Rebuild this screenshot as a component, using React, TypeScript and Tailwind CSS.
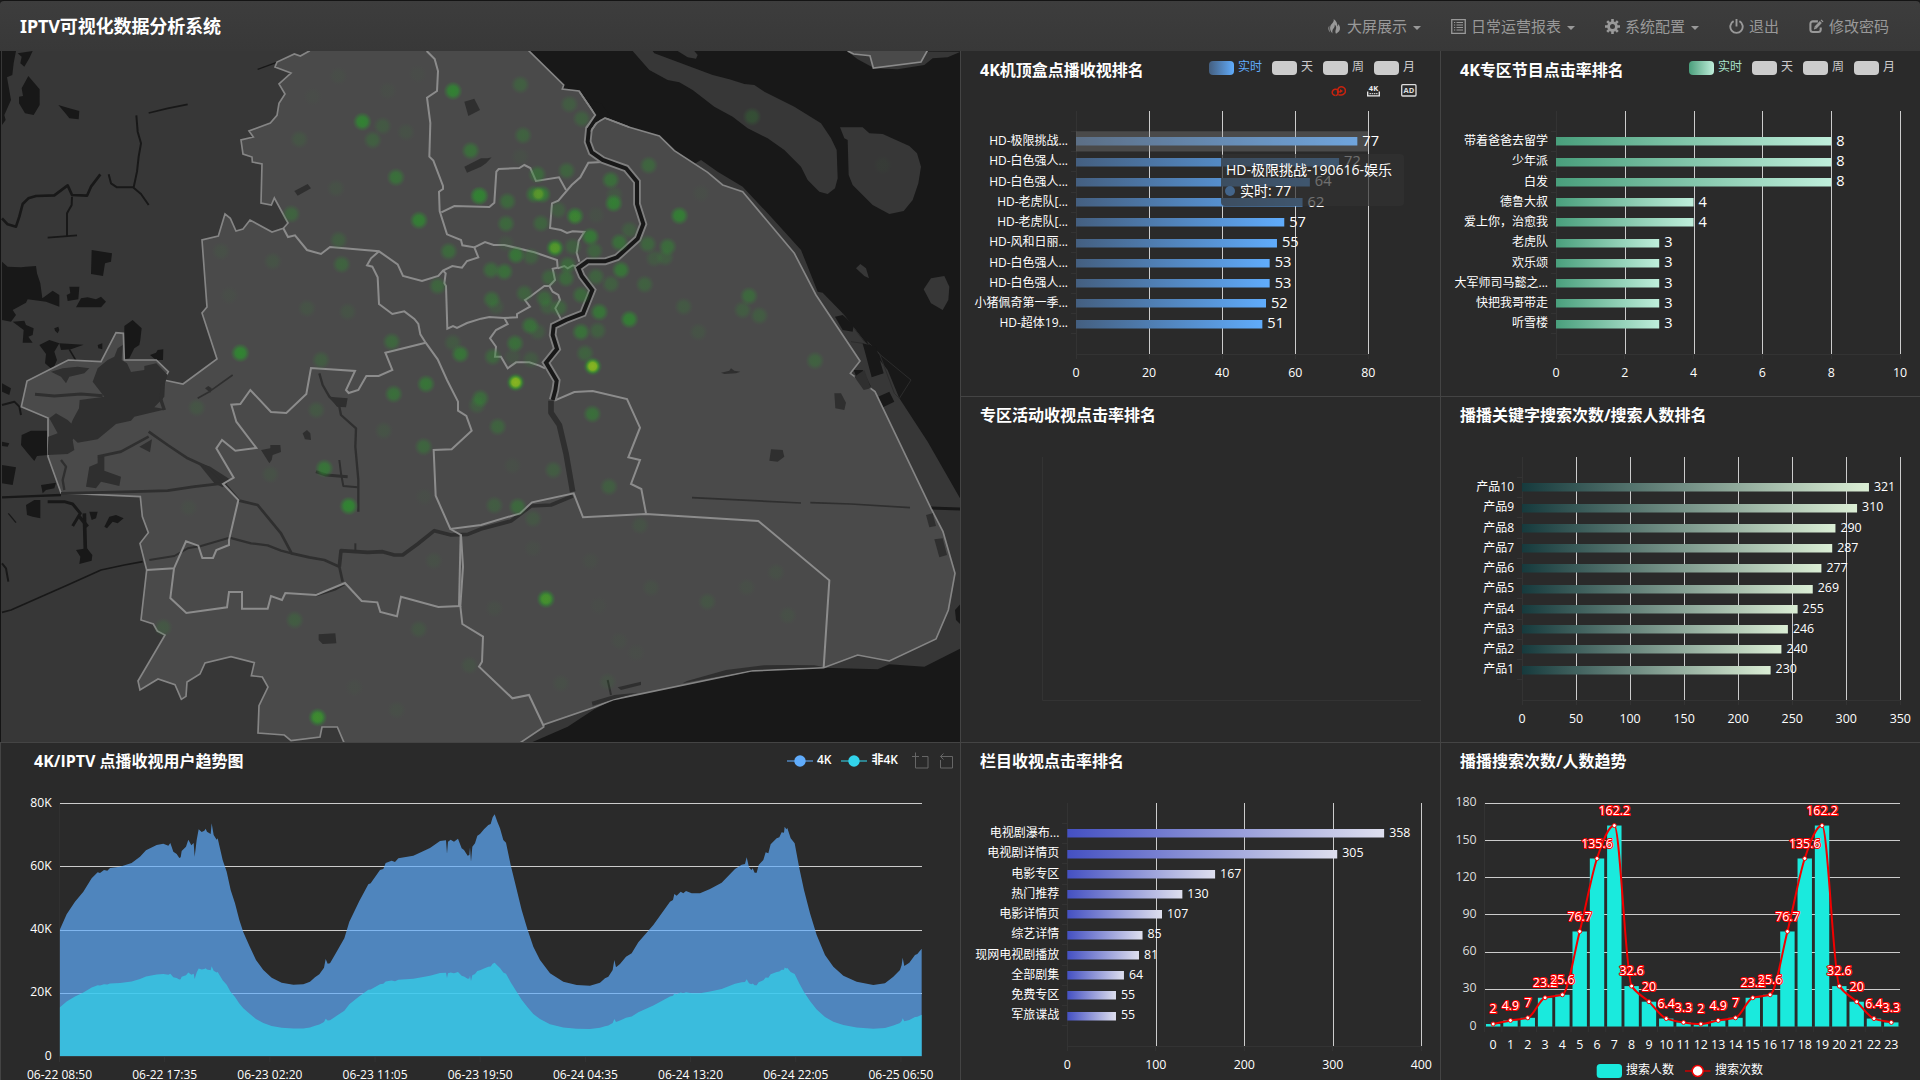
import React from "react";

const FONT = '"Open Sans", "Noto Sans CJK SC", sans-serif';
const NAV_FONT = '"Noto Sans", "Noto Sans CJK SC", sans-serif';

/* ---------- navigation icons ---------- */

const FireIcon = () => (
  <svg width="15" height="15" viewBox="0 0 15 15" fill="currentColor">
    <path d="M6.6 0C7.6 2.8 4.4 4.6 3.4 7 2.5 9.300 3.200 12.400 5.600 14.600 5 12.400 5.400 10.800 6.500 9.400 7.600 8 8 6.800 7.600 5.400 9.200 6.600 9.600 8.600 8.900 10.200 8.300 11.600 8.200 13.200 9 14.800 11.600 13.600 13.400 11.400 13 8.600 12.800 6.800 12 5.800 11.200 5 11.300 6 11 6.800 10.400 7.400 10.400 4.400 9.400 1.600 6.600 0Z" />
    <path d="M2.300 6.400C.8 8.400 1 11.600 3.400 13.800 2.300 11.600 2.200 9 2.300 6.400Z" />
  </svg>
);

const ListIcon = () => (
  <svg width="15" height="15" viewBox="0 0 15 15" fill="none" stroke="currentColor">
    <path d="M.75.5h13.500v14H.75z" strokeWidth="1.300" />
    <path d="M3 3.500h1.200M5.500 3.500H12M3 6h1.200M5.500 6H12M3 8.500h1.200M5.500 8.500H12M3 11h1.200M5.500 11H12" strokeWidth="1.200" />
  </svg>
);

const CogIcon = () => (
  <svg width="15" height="15" viewBox="0 0 15 15" fill="none" stroke="currentColor">
    <circle cx="7.500" cy="7.500" r="3.900" strokeWidth="2.800" />
    <path d="M7.500 0v3M7.500 12v3M0 7.500h3M12 7.500h3M2.200 2.200l2 2M10.800 10.800l2 2M12.800 2.200l-2 2M4.200 10.800l-2 2" strokeWidth="2.600" />
  </svg>
);

const OffIcon = () => (
  <svg width="15" height="15" viewBox="0 0 15 15" fill="none" stroke="currentColor" strokeWidth="1.900">
    <path d="M4.600 2.200A6.200 6.200 0 1 0 10.400 2.200" />
    <path d="M7.500 0v7.500" />
  </svg>
);

const EditIcon = () => (
  <svg width="16" height="15" viewBox="0 0 16 15" fill="none" stroke="currentColor">
    <path d="M9.500 2H4.200A2.700 2.700 0 0 0 1.500 4.700v6A2.700 2.700 0 0 0 4.200 13.400h5.600A2.700 2.700 0 0 0 12.500 10.700V8.500" strokeWidth="2.200" />
    <path d="M6.800 8.800L12.600 2.800" strokeWidth="3" />
    <path d="M13.400 2l1-1" strokeWidth="3" />
    <path d="M5.200 10.600l.6-2.600 2 2z" fill="currentColor" stroke="none" />
  </svg>
);

const NAV = [
  { label: "大屏展示", icon: <FireIcon />, caret: true },
  { label: "日常运营报表", icon: <ListIcon />, caret: true },
  { label: "系统配置", icon: <CogIcon />, caret: true },
  { label: "退出", icon: <OffIcon />, caret: false },
  { label: "修改密码", icon: <EditIcon />, caret: false },
];

function Header() {
  return (
    <header
      className="flex h-[51px] shrink-0 items-center justify-between rounded-t-[4px] border-t border-[#141414] bg-linear-to-b from-[#3d3d3d] to-[#383838] pr-[31px] pl-[20px]"
      style={{ fontFamily: NAV_FONT }}
    >
      <h1 className="text-[18px] leading-[26px] font-bold tracking-[-0.1px] whitespace-nowrap text-white">IPTV可视化数据分析系统</h1>
      <nav className="flex items-center gap-[30px] text-[15px] leading-[20px] text-[#999]">
        {NAV.map((n) => (
          <a key={n.label} className="flex items-center whitespace-nowrap">
            <span className="mr-[5px] flex w-[15px] shrink-0">{n.icon}</span>
            <span>{n.label}</span>
            {n.caret && <span className="mt-[4px] ml-[6px] border-x-4 border-t-4 border-x-transparent border-t-[#999]" />}
          </a>
        ))}
      </nav>
    </header>
  );
}

/* ---------- map ---------- */

const CITY =
  "925,153 898,168 880,162 828,186 822,201 870,219 834,252 852,282 834,310 828,346 808,369 744,393 757,411 720,420 726,462 753,471 754,486 783,492 780,609 811,615 820,594 861,669 847,685 813,696 747,660 726,687 705,693 688,655 672,642 652,708 603,720 618,921 603,939 648,1077 546,1152 488,1140 502,1115 466,1080 370,1080 367,1000 345,998 300,1085 202,1080 78,1143 61,1220 141,1254 141,1370 180,1479 418,1490 424,1550 442,1598 417,1630 437,1710 420,1860 457,1872 469,1893 492,1905 411,2043 417,2070 471,2037 522,2054 541,2098 555,2089 558,2046 597,2022 612,1989 690,1970 760,1988 751,2027 784,2031 801,2061 774,2117 771,2199 850,2205 870,2222 957,2211 963,2181 1009,2181 1030,2230 1555,2230 1628,2181 1628,2174 1780,2122 1840,2098 2250,2013 2468,2003 2570,1965 2665,1983 2805,1917 2842,1830 2862,1720 2826,1595 2790,1525 2622,1175 2548,1120 2577,1083 2445,885 2380,760 2225,575 2165,555 2120,517 2020,452 1975,408 1885,382 1812,354 1783,345 1734,273 1684,267 1688,255 1580,149 925,149";

const DISTRICTS = [
  "1277,153 1301,177 1311,213 1308,273 1278,293 1288,369 1285,470 1297,482 1326,558 1326,567 1314,575 1316,633 1338,703 1380,720 1384,736 1420,742 1432,772 1398,783 1383,803 1354,798 1326,812 1312,828 1263,843 1206,828 1190,793 1134,754 987,741 960,762 918,750 882,706 861,711 847,685",
  "1321,637 1360,618 1465,621 1480,608 1486,515 1493,507 1555,504 1570,495 1588,504 1605,543 1674,532 1695,570",
  "1805,486 1762,488 1738,532 1712,555 1672,602 1653,610 1647,684 1680,690 1698,699 1715,694 1750,696 1733,722 1727,758 1735,785",
  "1420,742 1452,726 1478,735 1510,735 1600,757 1668,780 1670,803 1655,806 1662,840 1645,858 1630,858 1590,888 1572,900 1587,920 1548,942 1548,952 1510,954 1520,972 1485,990 1467,1015 1485,1040 1482,1070 1500,1070 1520,1105 1545,1087 1585,1087 1615,1097 1632,1105",
  "1670,805 1690,798 1700,805 1715,796 1727,800",
  "1645,858 1655,875 1672,885 1677,900 1663,925 1680,958",
  "1326,812 1334,820 1330,850 1335,858 1339,986 1356,978 1368,984 1398,969 1440,956 1465,951 1510,954",
  "1134,754 1110,775 1098,796 1114,800 1130,832 1134,912 1174,942 1210,934 1240,957 1252,972 1258,1003 1274,1028 1310,1078 1338,1140 1371,1205 1371,1232 1396,1248 1412,1292 1352,1348 1298,1350 1304,1487 1348,1587 1440,1575 1557,1540 1593,1507 1718,1480 1746,1552 1935,1542 2272,1563 2485,1741 2468,2003",
  "1274,1028 1153,1058 1174,1110 1133,1128 1096,1128 1072,1170 1043,1179 1035,1170 1062,1113 930,1104 916,1182 856,1239 810,1236 748,1170 718,1212 691,1214 706,1265 766,1344 703,1352 663,1320 646,1345 698,1433 666,1452 712,1500 684,1620 684,1635 646,1650 636,1674 604,1674 592,1637 555,1624 519,1705 437,1710",
  "519,1705 508,1794 556,1839 678,1822 684,1776 723,1776 723,1826 800,1826 810,1788 843,1800 853,1779 945,1785 1032,1749 1082,1803 1129,1807 1138,1836 1188,1849 1200,1790 1312,1821 1378,1818 1386,1700 1380,1605 1348,1587",
  "1374,1818 1379,1605",
  "1378,1818 1384,1872 1446,1910 1443,1985 1434,2000 1534,2095 1584,2085 1628,2178",
  "1660,1202 1720,1176 1775,1173 1878,1197 1917,1283 1882,1372 1917,1380 1890,1452 1921,1467 1935,1540",
];

const RIVER =
  "1798,340 1764,385 1760,425 1772,457 1805,480 1875,505 1908,545 1908,612 1927,672 1910,716 1848,772 1812,784 1760,784 1732,804 1742,828 1774,870 1746,940 1695,960 1658,978 1655,1005 1668,1047 1635,1088 1667,1142 1663,1170 1655,1200";

const SEA = [
  "1560,153 2880,153 2880,1500 2780,1325 2695,1195 2660,1110 2590,1022 2525,940 2465,878 2450,875 2425,812 2400,750 2300,640 2225,560 2150,515 2100,480 1900,600",
  "1590,2228 1700,2180 1780,2128 1840,2098 2200,1900 2468,2003 2630,2008 2665,1993 2770,2000 2880,1945 2880,2228",
];

const ISLANDS = [
  "455,33 505,90 560,120 595,127 635,150 700,200 755,230 800,265 860,295 910,330 960,380 980,420 1015,455 1040,462 1062,445 1070,415 1067,330 1050,295 1020,250 940,200 850,155 820,135 790,132 745,118 695,105 520,40 515,33",
  "1077,262 1145,262 1165,280 1205,282 1285,318 1308,340 1320,380 1312,430 1295,480 1268,513 1225,522 1175,495 1115,435 1103,405 1100,300 1090,295",
  "1125,685 1138,672 1155,685 1164,715 1150,708",
  "1328,748 1350,715 1390,708 1405,740 1402,780 1385,810 1350,790",
  "1098,33 1130,58 1180,85 1250,88 1330,75 1355,55 1400,52 1440,35",
  "590,33 620,52 645,56 650,45 640,33",
];

const WEST_WATER = [
  "3,153 45,153 38,190 34,225 18,232 30,300 10,345 14,360 3,375",
  "50,160 95,153 85,175 70,200 58,190 62,170",
  "62,265 82,228 116,268 116,315 98,345 72,340 54,310 54,290 66,288",
  "172,315 205,325 235,333 233,358 205,355 195,342",
  "272,750 333,760 330,785 312,790 306,828 270,822",
  "3,785 20,800 60,802 75,800 105,798 108,820 118,850 124,895 155,872 175,885 175,920 135,905 80,898 75,908 35,930 45,945 30,965 3,960",
  "205,860 235,860 232,898 200,903 197,885 208,880",
  "225,922 240,895 260,892 285,898 300,890 315,905 300,922",
  "35,965 70,962 75,975 98,985 95,1005 82,1010 95,1028 65,1028 68,990",
  "370,978 395,960 422,985 418,1020 415,1035 400,1045 385,1075 370,1078",
  "115,1035 145,1020 175,1030 160,1055 168,1080 155,1110 132,1090 135,1062",
  "175,1030 248,1034 210,1048 180,1050",
  "447,1065 465,1058 470,1050 487,1048 486,1080 465,1080",
  "160,985 172,980 175,990 170,1000 162,992",
  "290,1035 304,1030 304,1048 292,1045",
  "3,1150 30,1165 25,1185 3,1175",
  "62,1305 90,1292 140,1292 140,1365 108,1368 100,1383 80,1360 60,1335",
  "3,1395 45,1402 35,1455 3,1450",
  "3,1325 25,1330 20,1340 3,1338",
  "75,1515 100,1500 118,1500 118,1555 95,1550 78,1545",
  "225,1650 258,1645 274,1665 272,1682 235,1692 238,1670",
  "310,1580 325,1550 345,1545 368,1555 350,1570 335,1565 318,1585",
  "265,1535 290,1535 285,1555 272,1560",
  "120,1455 165,1448 160,1465 135,1470 125,1480",
];

const WEST_STREAMS: [string, number][] = [
  ["406,346 410,395 420,430 413,470 408,515 398,562", 6],
  ["443,339 500,325 560,313", 5],
  ["3,655 20,673 45,680 55,650 65,612 82,595 105,588 160,586 200,556 213,585 258,587 270,560 298,523", 8],
  ["323,523 330,550 348,562 396,562 420,582 443,615", 6],
  ["213,590 212,615 198,640 198,710", 6],
  ["140,713 180,710 228,706", 5],
  ["770,208 825,188", 4],
  ["205,1048 230,1090", 5],
  ["3,1492 60,1490 180,1485", 7],
  ["3,1837 30,1830 120,1790 200,1755 300,1710 370,1695 425,1685", 5],
  ["140,1505 190,1505 215,1512 238,1540 215,1578", 9],
  ["250,1540 253,1650", 11],
  ["235,1550 260,1580", 10],
  ["3,1215 40,1205 55,1220 60,1245", 6],
  ["22,1540 45,1568", 4],
  ["3,1690 15,1705 22,1745", 6],
];

const INNER_WATER = [
  "365,1035 350,1045 340,1070 320,1080 290,1105 275,1145 310,1190 236,1200 234,1225 215,1260 200,1300 230,1328 290,1318 330,1285 345,1272 390,1262 400,1250 450,1238 495,1228 460,1222 490,1190 492,1150 500,1125 466,1090 430,1098 430,1110 390,1116 378,1090 362,1080",
  "145,1255 165,1240 200,1260 232,1290 215,1320 220,1350 200,1362 140,1365 142,1310 170,1300",
  "185,1105 230,1100 265,1105 250,1120 205,1130 195,1150 180,1130 150,1115",
  "255,1460 265,1400 290,1390 290,1370 310,1365 310,1412 360,1430 355,1458 320,1450 300,1445 285,1465",
  "415,1340 453,1318 447,1357",
  "590,1388 628,1400 690,1440 665,1462 640,1450",
  "780,1350 808,1345 808,1335 838,1335 840,1356 815,1365 812,1380 805,1390",
  "905,1300 918,1290 928,1300 930,1320 912,1318",
  "953,1903 1003,1900 1006,1930 965,1932 953,1920",
  "880,573 920,552 930,565 890,587",
  "1390,305 1420,296 1437,330 1402,348",
  "1390,500 1440,475 1440,500 1398,518",
  "1440,475 1460,475 1472,472 1455,490 1440,500",
  "985,1190 1040,1195 1035,1222 1008,1220",
  "612,1165 622,1158 632,1165 628,1178",
  "2310,1348 2345,1350 2350,1370 2330,1385 2305,1382",
  "2500,1180 2520,1180 2535,1208 2530,1230 2503,1225",
  "2160,1118 2185,1112 2190,1105 2200,1112 2218,1115 2205,1120 2170,1122",
  "2058,2043 2175,2010 2290,1996 2360,1995 2440,1996 2468,2001 2255,2010 2045,2050",
  "1772,2105 1840,2085 1910,2078 1840,2097 1775,2117",
  "1850,2062 1920,2045 1920,2055 1860,2070",
  "2775,1545 2795,1540 2805,1578 2785,1582",
  "2800,1618 2825,1615 2838,1665 2815,1672",
  "2560,1130 2590,1110 2610,1165 2588,1170",
];

const INNER_STREAMS: [string, number][] = [
  ["443,1295 500,1335 560,1375 625,1405 670,1450 715,1502 770,1515 840,1600 872,1660 925,1672 970,1680 1015,1700 1025,1745", 8],
  ["685,1613 750,1630 800,1636 840,1652 872,1660", 7],
  ["445,1680 520,1668 560,1645 600,1638 685,1613", 6],
  ["180,1480 400,1475 500,1472 580,1460 665,1450", 8],
  ["290,1370 360,1355 443,1310", 8],
  ["102,1183 160,1188 240,1182 305,1187", 9],
  ["1015,1700 1020,1652 1100,1657 1145,1655 1180,1665 1205,1665 1250,1632 1300,1592 1350,1605 1400,1603 1440,1587 1530,1563 1590,1518 1650,1515 1715,1488", 11],
  ["955,1120 965,1155 985,1190 1015,1220 1020,1245 1065,1285 1063,1340 1072,1440 1072,1535", 7],
  ["1015,1380 1020,1420 1027,1458 1070,1462", 6],
  ["945,1415 975,1425 1040,1430", 9],
  ["590,1195 625,1175 695,1125", 5],
  ["1650,1202 1650,1238 1675,1275 1695,1360 1715,1475", 17],
  ["2073,1493 2400,1509", 5],
  ["2428,1508 2550,1512 2727,1523", 5],
  ["1820,2040 1830,2085", 6],
  ["945,1785 1000,1768 1030,1752", 9],
  ["485,1150 480,1200 490,1230", 10],
  ["180,1380 195,1400 185,1440 190,1470", 7],
  ["1063,1630 1063,1652", 6],
];

type Dot = [number, number, number];
const HEAT: { dx: number; dy: number; dots: Dot[] }[] = [
  {
    dx: 0,
    dy: 0,
    dots: [
      [1356, 273, 0.9], [1084, 365, 0.9], [1145, 378, 0.25], [1115, 420, 0.35], [1215, 396, 0.12], [895, 418, 0.18], [1409, 452, 0.6],
      [1185, 532, 0.62], [1005, 565, 0.12], [1254, 661, 0.85], [871, 642, 0.42], [1013, 720, 0.3], [1022, 793, 0.42], [1343, 754, 0.52],
      [815, 784, 0.15], [660, 754, 0.1], [685, 886, 0.06], [918, 925, 0.15], [1040, 935, 0.15], [1310, 858, 0.45], [1172, 1025, 0.48],
      [718, 1059, 0.95], [960, 1080, 0.3], [1355, 1028, 0.25], [1378, 1062, 0.7], [1275, 1152, 0.7], [1178, 1182, 0.6], [1434, 588, 0.7],
      [1012, 228, 0.06], [1160, 272, 0.06], [1250, 222, 0.04], [935, 290, 0.04],
    ],
  },
  {
    dx: 1440,
    dy: 120,
    dots: [
      [118, 134, 0.35], [265, 193, 0.3], [302, 236, 0.35], [126, 286, 0.4], [118, 350, 0.08], [503, 376, 0.45], [257, 392, 0.42],
      [169, 403, 0.5], [389, 420, 0.6], [-4, 467, 0.6], [79, 484, 0.5], [160, 463, 0.65], [183, 463, 0.75], [398, 490, 0.85], [400, 465, 0.2],
      [282, 528, 0.85], [75, 551, 0.5], [180, 550, 0.42], [345, 525, 0.1], [595, 527, 0.85], [232, 510, 0.3], [660, 460, 0.06],
      [328, 590, 0.75], [445, 570, 0.3], [415, 607, 0.6], [222, 624, 0.95], [500, 612, 0.45], [560, 620, 0.55], [552, 652, 0.3],
      [520, 655, 0.25], [105, 645, 0.7], [150, 650, 0.35], [340, 632, 0.4], [275, 620, 0.35], [30, 690, 0.5], [70, 695, 0.6],
      [260, 675, 0.5], [255, 715, 0.5], [205, 712, 0.4], [420, 690, 0.7], [345, 710, 0.4], [390, 732, 0.35], [491, 733, 0.38],
      [130, 760, 0.4], [190, 775, 0.45], [300, 765, 0.5], [32, 778, 0.5], [45, 800, 0.2], [235, 803, 0.4], [200, 800, 0.3], [355, 816, 0.7],
      [445, 838, 0.85], [147, 857, 0.6], [170, 875, 0.25], [608, 800, 0.25], [804, 768, 0.5], [785, 810, 0.3], [835, 827, 0.3],
      [652, 876, 0.15], [300, 876, 0.65], [350, 872, 0.35], [102, 910, 0.6], [312, 940, 0.4], [335, 979, 1], [104, 1027, 1],
      [35, 950, 0.45], [150, 958, 0.25], [1002, 962, 0.38], [813, 230, 0.3], [1205, 375, 0.05], [-2, 1075, 0.55], [334, 1122, 0.6],
      [50, 1160, 0.42], [95, 950, 0.15], [75, 610, 0.15],
    ],
  },
  {
    dx: 0,
    dy: 1140,
    dots: [
      [587, 83, 0.18], [946, 90, 0.22], [1148, 152, 0.15], [1268, 200, 0.45], [808, 283, 0.12], [970, 265, 0.7], [1043, 378, 0.95],
      [563, 383, 0.07], [1270, 350, 0.06], [1298, 542, 0.1], [487, 742, 0.22], [881, 720, 0.3], [1253, 748, 0.18], [1405, 856, 0.13],
      [1187, 990, 0.08], [950, 1012, 0.95], [1060, 922, 0.05], [1428, 75, 0.3],
    ],
  },
  {
    dx: 1440,
    dy: 1140,
    dots: [
      [94, 257, 0.08], [217, 270, 0.3], [384, 320, 0.33], [40, 376, 0.3], [110, 380, 0.5], [156, 416, 0.2], [477, 436, 0.14],
      [156, 505, 0.06], [328, 543, 0.06], [885, 577, 0.1], [510, 623, 0.1], [797, 622, 0.08], [679, 665, 0.18], [195, 657, 0.98],
      [920, 706, 0.1], [40, 685, 0.07], [353, 677, 0.04], [415, 783, 0.06], [465, 818, 0.05], [240, 910, 0.08], [380, 905, 0.12],
    ],
  },
];

const HOT: Dot[] = [
  [1775, 1099, 1], [1544, 1147, 1], [1662, 744, 0.4], [1612, 582, 0.45], [1635, 1797, 0.25], [950, 2152, 0.15], [1722, 652, 0.1],
];

function CityMap() {
  return (
    <svg className="block h-[691px] w-[960px]" viewBox="0 153 2880 2073">
      <defs>
        <radialGradient id="heat">
          <stop offset="0" stopColor="#2d8c2d" stopOpacity="0.95" />
          <stop offset="0.5" stopColor="#2f8a31" stopOpacity="0.85" />
          <stop offset="0.8" stopColor="#348036" stopOpacity="0.35" />
          <stop offset="1" stopColor="#348036" stopOpacity="0" />
        </radialGradient>
        <radialGradient id="hot">
          <stop offset="0" stopColor="#88b522" />
          <stop offset="0.5" stopColor="#82b022" stopOpacity="0.95" />
          <stop offset="1" stopColor="#35962c" stopOpacity="0" />
        </radialGradient>
      </defs>
      <rect x="0" y="153" width="2880" height="2073" fill="#373737" />
      <g fill="#181818">
        {SEA.map((p) => <polygon key={p} points={p} />)}
        {WEST_WATER.map((p) => <polygon key={p} points={p} />)}
        <polygon points="2862,1830 2880,1810 2880,1875 2865,1860" />
      </g>
      <g fill="none" stroke="#181818" strokeLinejoin="round">
        {WEST_STREAMS.map(([p, w]) => <polyline key={p} points={p} strokeWidth={w} />)}
        <polyline points="2765,1523 2880,1527" strokeWidth="9" />
      </g>
      <g transform="translate(1440 120)">
        <g fill="#373737">{ISLANDS.map((p) => <polygon key={p} points={p} />)}</g>
        <polygon points="1105,33 1118,42 1165,46 1177,84 1320,66 1340,33" fill="#4a4a4a" />
        <polyline points="1100,33 1118,42 1167,47 1177,84 1320,66 1340,30" fill="none" stroke="#8a8a8a" strokeWidth="5" />
        <path d="M1110 905L1145 910 1180 1000 1205 1000 1160 905 1195 940 1240 1060 1255 1075 1290 1020 1150 905 1085 820" fill="none" stroke="#2c2c2c" strokeWidth="3" />
        <path d="M1145 910L1185 920 1208 1000 1172 1012ZM1118 990L1145 990 1170 1040 1130 1020ZM1188 1072L1225 1055 1240 1085 1200 1105ZM1062 830L1085 825 1118 855 1115 875 1085 870Z" fill="#181818" />
      </g>
      <polygon points={CITY} fill="#4a4a4a" stroke="#858585" strokeWidth="5" />
      <g fill="#2f2f2f">{INNER_WATER.map((p) => <polygon key={p} points={p} />)}</g>
      <g fill="none" stroke="#2f2f2f" strokeLinejoin="round">
        {INNER_STREAMS.map(([p, w]) => <polyline key={p} points={p} strokeWidth={w} />)}
      </g>
      <g fill="none" stroke="#8c8c8c" strokeWidth="6">
        {DISTRICTS.map((p) => <polyline key={p} points={p} />)}
      </g>
      <polyline points={RIVER} fill="none" stroke="#7f7f7f" strokeWidth="23" />
      <polyline points={RIVER} fill="none" stroke="#181818" strokeWidth="12" />
      <polygon points="1765,300 1800,310 1830,350 1800,358 1783,372 1768,366 1782,345" fill="#181818" />
      <polyline points="1734,273 1783,345 1757,383" fill="none" stroke="#858585" strokeWidth="5" />
      <polyline points="1885,382 1812,354 1785,370 1770,395" fill="none" stroke="#858585" strokeWidth="5" />
      {HEAT.map((g) => (
        <g key={`${g.dx}-${g.dy}`} transform={`translate(${g.dx} ${g.dy})`}>
          {g.dots.map(([x, y, o]) => (
            <circle key={`${x}-${y}`} cx={x} cy={y} r="29" fill="url(#heat)" opacity={o} />
          ))}
        </g>
      ))}
      {HOT.map(([x, y, o]) => (
        <circle key={x} cx={x} cy={y} r="23" fill="url(#hot)" opacity={o} />
      ))}
    </svg>
  );
}

/* ---------- horizontal bar charts ---------- */

type Row = [string, number];

interface BarProps {
  id: string;
  view: string;
  x0: number;
  x1: number;
  top: number;
  max: number;
  step: number;
  from: string;
  to: string;
  rows: Row[];
  valueSize: number;
  hover?: boolean;
}

const SLOT = 20.25;

function BarChart({ id, view, x0, x1, top, max, step, from, to, rows, valueSize, hover }: BarProps) {
  const k = (x1 - x0) / max;
  const bottom = top + 243;
  const ticks = Array.from({ length: Math.floor(max / step) + 1 }, (_, i) => i * step);
  return (
    <svg className="block min-h-0 flex-1" viewBox={view} preserveAspectRatio="xMinYMin meet" style={{ fontFamily: FONT }}>
      <defs>
        <linearGradient id={id}>
          <stop offset="0" stopColor={from} />
          <stop offset="1" stopColor={to} />
        </linearGradient>
      </defs>
      <g stroke="#333" shapeRendering="crispEdges">
        <path d={`M${x0} ${top}V${bottom}H${x1}`} fill="none" />
        {ticks.map((t) => <path key={t} d={`M${x0 + t * k} ${bottom}v5`} />)}
        {rows.concat([["", 0]]).map((r, i) => <path key={i} d={`M${x0 - 5} ${top + SLOT * (i + 1)}h5`} />)}
      </g>
      {ticks.slice(1).map((t) => (
        <rect key={t} x={Math.round(x0 + t * k)} y={top} width="1" height={243} fill="#ccc" />
      ))}
      {rows.map(([name, v], i) => {
        const c = top + SLOT * (i + 1.5);
        return (
          <g key={i}>
            <rect x={x0} y={Math.round(c - 4)} width={v * k} height="8.500" fill={`url(#${id})`} />
            <text x={x0 - 8} y={c + 3.800} textAnchor="end" fontSize="12" fill="#fff">{name}</text>
          </g>
        );
      })}
      {hover && <rect x={x0} y={top + SLOT} width={x1 - x0} height={SLOT} fill="#969696" fillOpacity="0.3" />}
      {rows.map(([, v], i) => (
        <text key={i} x={x0 + v * k + 5} y={top + SLOT * (i + 1.5) + valueSize * 0.36 - 0.8} fontSize={valueSize} fill="#fff">{v}</text>
      ))}
      {ticks.map((t) => (
        <text key={t} x={x0 + t * k} y={bottom + 23} textAnchor="middle" fontSize="12.400" fill="#fff">{t}</text>
      ))}
    </svg>
  );
}

/* ---------- panels ---------- */

function Legend({ swatch, color }: { swatch: string; color: string }) {
  return (
    <div className="mr-[25px] ml-auto flex h-[14px] items-center gap-[10px] text-[12px] leading-[14px] text-[#ccc]">
      <div className="flex items-center gap-[4px]">
        <span className={`h-[14px] w-[25px] rounded-[4px] ${swatch}`} />
        <span className={`-mt-[2px] ${color}`}>实时</span>
      </div>
      {["天", "周", "月"].map((t) => (
        <div key={t} className="flex items-center gap-[4px]">
          <span className="h-[14px] w-[25px] rounded-[4px] bg-[#ccc]" />
          <span className="-mt-[2px]">{t}</span>
        </div>
      ))}
    </div>
  );
}

function Panel({ title, children, aside, pad = "pl-[19px]" }: { title: string; children: React.ReactNode; aside?: React.ReactNode; pad?: string }) {
  return (
    <section className="relative flex min-h-0 flex-col overflow-hidden border-t border-l border-[#444] bg-[#2a2a2a]" style={{ fontFamily: FONT }}>
      <div className={`flex h-[53px] shrink-0 ${pad}`}>
        <h2 className="mt-[6px] text-[16px] leading-[24px] font-bold whitespace-nowrap text-white">{title}</h2>
        {aside}
      </div>
      {children}
    </section>
  );
}

function SourceIcons() {
  return (
    <div className="mt-[9px] mr-[23px] flex items-center justify-end gap-[21px]">
      <svg width="15" height="12" viewBox="0 0 15 12" fill="none" stroke="#c8230f" strokeWidth="1.500">
        <path d="M4.500 10.600A3.200 3.200 0 1 1 6.800 5.200L8.500 7.500M4.800 10.600A2.600 2.600 0 0 0 7 8.800C6 5.500 7 2 10 1.700a4.100 4.100 0 0 1 .5 8.300H7.500" />
        <path d="M9 4l3 2-3 2z" fill="#c8230f" stroke="none" />
      </svg>
      <svg width="13" height="13" viewBox="0 0 13 13">
        <text x="6.500" y="6.500" textAnchor="middle" fontSize="7.500" fontWeight="700" fill="#eee">4K</text>
        <path d="M.7 7.500v4.300h11.600V7.500" fill="none" stroke="#eee" strokeWidth="1.300" />
        <path d="M2.500 9.700h8" stroke="#eee" strokeDasharray="1.500 .7" />
      </svg>
      <svg width="16" height="13" viewBox="0 0 16 13">
        <rect x=".7" y=".7" width="14.300" height="11.300" rx="1" fill="none" stroke="#ddd" strokeWidth="1.300" />
        <text x="7.900" y="9.200" textAnchor="middle" fontSize="7.500" fontWeight="700" fill="#ddd">AD</text>
      </svg>
    </div>
  );
}

const STB: Row[] = [
  ["HD-极限挑战...", 77], ["HD-白色强人...", 72], ["HD-白色强人...", 64], ["HD-老虎队[...", 62], ["HD-老虎队[...", 57],
  ["HD-风和日丽...", 55], ["HD-白色强人...", 53], ["HD-白色强人...", 53], ["小猪佩奇第一季...", 52], ["HD-超体19...", 51],
];
const ZONE: Row[] = [
  ["带着爸爸去留学", 8], ["少年派", 8], ["白发", 8], ["德鲁大叔", 4], ["爱上你，治愈我", 4],
  ["老虎队", 3], ["欢乐颂", 3], ["大军师司马懿之...", 3], ["快把我哥带走", 3], ["听雪楼", 3],
];
const KEYWORD: Row[] = [
  ["产品10", 321], ["产品9", 310], ["产品8", 290], ["产品7", 287], ["产品6", 277],
  ["产品5", 269], ["产品4", 255], ["产品3", 246], ["产品2", 240], ["产品1", 230],
];
const COLUMN: Row[] = [
  ["电视剧瀑布...", 358], ["电视剧详情页", 305], ["电影专区", 167], ["热门推荐", 130], ["电影详情页", 107],
  ["综艺详情", 85], ["现网电视剧播放", 81], ["全部剧集", 64], ["免费专区", 55], ["军旅谍战", 55],
];

/* ---------- search trend ---------- */

const HALF = [2, 4.9, 7, 23.2, 25.6, 76.7, 135.6, 162.2, 32.6, 20, 6.4, 3.3];
const SEARCH = [...HALF, ...HALF];

function monotonePath(pts: [number, number][]) {
  const n = pts.length;
  const d: number[] = [];
  for (let i = 0; i < n - 1; i++) d.push((pts[i + 1][1] - pts[i][1]) / (pts[i + 1][0] - pts[i][0]));
  const m = pts.map((_, i) => {
    if (i === 0) return d[0];
    if (i === n - 1) return d[n - 2];
    const a = d[i - 1];
    const b = d[i];
    if (a * b <= 0) return 0;
    return Math.sign(a) * Math.min(Math.abs(a) * 1.6, Math.abs(b) * 1.6, Math.abs(a + b) / 2);
  });
  let s = `M${pts[0][0]} ${pts[0][1]}`;
  for (let i = 0; i < n - 1; i++) {
    const h = (pts[i + 1][0] - pts[i][0]) / 3;
    s += `C${pts[i][0] + h} ${pts[i][1] + m[i] * h} ${pts[i + 1][0] - h} ${pts[i + 1][1] - m[i + 1] * h} ${pts[i + 1][0]} ${pts[i + 1][1]}`;
  }
  return s;
}

function SearchTrend() {
  const x0 = 1484.5;
  const slot = 17.31;
  const y = (v: number) => 1026.5 - v * 1.239;
  const pts = SEARCH.map((v, i) => [x0 + slot * (i + 0.5), y(v)] as [number, number]);
  return (
    <svg className="block min-h-0 flex-1" viewBox="1441 796 479 284" preserveAspectRatio="xMinYMin meet" style={{ fontFamily: FONT }}>
      {[0, 30, 60, 90, 120, 150, 180].map((v) => (
        <g key={v}>
          {v > 0 && <rect x={x0} y={Math.floor(y(v))} width="415.500" height="1" fill="#ccc" />}
          <text x="1476.700" y={y(v) + 3} textAnchor="end" fontSize="12.400" fill="#ddd">{v}</text>
        </g>
      ))}
      <path d="M1484.500 803V1026.500H1900" fill="none" stroke="#333" />
      {SEARCH.map((v, i) => (
        <g key={i}>
          <rect x={pts[i][0] - 7.200} y={y(v)} width="14.400" height={v * 1.239} fill="#1aeadd" />
          <path d={`M${x0 + slot * i} 1027v5`} stroke="#333" />
          <text x={pts[i][0]} y="1049" textAnchor="middle" fontSize="12.400" fill="#fff">{i % 24}</text>
        </g>
      ))}
      <path d={monotonePath(pts)} fill="none" stroke="#f20000" strokeWidth="2" />
      {pts.map(([px, py], i) => (
        <g key={i}>
          <circle cx={px} cy={py} r="2" fill="#fff" stroke="#e00" strokeWidth="1" />
          <text x={px} y={py - 10.800} textAnchor="middle" fontSize="12.400" fill="#fff" stroke="#f00" strokeWidth="2.200" strokeLinejoin="round" paintOrder="stroke">{SEARCH[i]}</text>
        </g>
      ))}
      <rect x="1596.700" y="1064" width="25.300" height="14" rx="3.500" fill="#1aeadd" />
      <text x="1626" y="1074.300" fontSize="12" fill="#fff">搜索人数</text>
      <path d="M1685 1071h25.500" stroke="#c00" strokeWidth="1.500" />
      <circle cx="1697.700" cy="1071" r="5.500" fill="#fff" stroke="#e00" strokeWidth="1.500" />
      <text x="1715" y="1074.300" fontSize="12" fill="#fff">搜索次数</text>
    </svg>
  );
}

/* ---------- user trend ---------- */

const TREND: [number, number][] = [
  [179, 570], [200, 523], [225, 485], [250, 455], [275, 415], [293, 397], [300, 399], [312, 390], [322, 392], [330, 384], [360, 380], [395, 369],
  [420, 350], [438, 331], [470, 315], [490, 311], [505, 317], [511, 309], [520, 335], [530, 342], [538, 354], [542, 352], [545, 333], [558, 320],
  [565, 299], [574, 316], [581, 309], [584, 350], [590, 300], [596, 268], [605, 276], [613, 272], [617, 266], [621, 275], [632, 282], [635, 250],
  [641, 285], [650, 299], [653, 295], [668, 360], [680, 395], [692, 450], [705, 490], [718, 540], [730, 577], [748, 617], [768, 660], [790, 690],
  [815, 713], [845, 728], [880, 734], [910, 733], [930, 725], [945, 712], [958, 703], [972, 683], [977, 657], [983, 671], [990, 670], [1010, 635],
  [1033, 595], [1048, 545], [1078, 483], [1105, 433], [1112, 430], [1140, 390], [1150, 387], [1157, 369], [1175, 362], [1185, 366], [1195, 355],
  [1240, 347], [1290, 324], [1320, 303], [1338, 301], [1341, 341], [1344, 305], [1352, 299], [1362, 305], [1374, 296], [1385, 325], [1392, 330],
  [1403, 347], [1408, 345], [1410, 322], [1413, 365], [1417, 320], [1425, 310], [1432, 287], [1440, 282], [1452, 268], [1465, 255], [1472, 252],
  [1478, 232], [1484, 223], [1492, 245], [1500, 265], [1510, 300], [1518, 308], [1532, 375], [1548, 440], [1565, 510], [1582, 567], [1600, 620],
  [1620, 660], [1650, 700], [1690, 725], [1730, 735], [1770, 737], [1800, 728], [1815, 715], [1825, 710], [1838, 690], [1843, 660], [1848, 682],
  [1860, 672], [1878, 650], [1895, 640], [1915, 607], [1960, 555], [2010, 485], [2019, 480], [2023, 462], [2030, 467], [2042, 455], [2050, 460],
  [2058, 453], [2075, 460], [2100, 460], [2130, 447], [2165, 428], [2205, 387], [2225, 374], [2235, 372], [2240, 352], [2247, 382], [2254, 390],
  [2258, 385], [2264, 398], [2270, 398], [2276, 375], [2290, 360], [2297, 337], [2305, 340], [2312, 313], [2330, 295], [2338, 292], [2345, 277],
  [2352, 278], [2354, 260], [2359, 268], [2362, 264], [2372, 295], [2384, 310], [2398, 385], [2412, 450], [2430, 520], [2450, 585], [2475, 645],
  [2500, 680], [2530, 707], [2570, 725], [2620, 735], [2655, 730], [2680, 710], [2700, 690], [2705, 675], [2708, 653], [2713, 678], [2728, 668],
  [2745, 645], [2752, 642], [2765, 626],
];

const areaPath = (ratio: number) =>
  `M179 949${TREND.map(([x, y]) => `L${x} ${949 - (949 - y) * ratio}`).join("")}L2765 949Z`;

const TIMES = ["06-22 08:50", "06-22 17:35", "06-23 02:20", "06-23 11:05", "06-23 19:50", "06-24 04:35", "06-24 13:20", "06-24 22:05", "06-25 06:50"];

function UserTrend() {
  return (
    <svg className="block min-h-0 flex-1" viewBox="1 796 959 284" preserveAspectRatio="xMinYMin meet" style={{ fontFamily: FONT }}>
      {["80K", "60K", "40K", "20K", "0"].map((t, i) => (
        <g key={t}>
          {i < 4 && <rect x="60" y={Math.round(803 + i * 63.250)} width="862" height="1" fill="#ccc" />}
          <text x="51.700" y={806.500 + i * 63.250} textAnchor="end" fontSize="12.200" fill="#fff">{t}</text>
        </g>
      ))}
      <g transform="translate(0 740) scale(0.333333)">
        <path d={areaPath(1)} fill="#60acfc" fillOpacity="0.7" />
        <path d={areaPath(0.387)} fill="#32d3eb" fillOpacity="0.7" />
      </g>
      <path d="M59.500 803V1056.500H922" fill="none" stroke="#333" strokeOpacity="0.7" />
      {TIMES.map((t, i) => (
        <g key={t}>
          <path d={`M${59.5 + i * 105.18} 1057v5`} stroke="#333" />
          <text x={59.5 + i * 105.18} y="1079" textAnchor="middle" fontSize="12" fill="#fff">{t}</text>
        </g>
      ))}
    </svg>
  );
}

function TrendLegend() {
  return (
    <div className="mt-[8px] mr-[6px] ml-auto flex h-[18px] items-center text-[12px] leading-[14px] text-white">
      <svg className="mr-[4px]" width="26" height="14" viewBox="0 0 26 14">
        <path d="M0 8h26" stroke="#60acfc" strokeOpacity="0.7" strokeWidth="1.500" />
        <circle cx="13" cy="8" r="5.700" fill="#60acfc" />
      </svg>
      <span className="font-semibold">4K</span>
      <svg className="mr-[4px] ml-[10px]" width="26" height="14" viewBox="0 0 26 14">
        <path d="M0 8h26" stroke="#32d3eb" strokeOpacity="0.7" strokeWidth="1.500" />
        <circle cx="13" cy="8" r="5.700" fill="#32d3eb" />
      </svg>
      <span className="font-semibold">非4K</span>
      <svg className="ml-[14px]" width="42" height="17" viewBox="0 0 42 17" fill="none" stroke="#666" strokeWidth="1">
        <path d="M0 4.500h7M3.500 .5v15.500h12.500V4.500H10" />
        <path d="M28.500 8v8h12V4.500H28.500M31.500 1.500l-3 3 3 3" />
      </svg>
    </div>
  );
}

export default function App() {
  return (
    <div className="flex h-[1080px] w-[1920px] flex-col overflow-hidden bg-[#1a1a1a]">
      <Header />
      <main className="grid min-h-0 flex-1 grid-cols-[960px_480px_480px] grid-rows-[345px_346px_338px]">
        <div className="row-span-2 overflow-hidden border-l border-[#141414]">
          <CityMap />
        </div>

        <section className="relative flex min-h-0 flex-col border-l border-[#444] bg-[#2a2a2a]" style={{ fontFamily: FONT }}>
          <div className="flex h-[54px] shrink-0 pl-[19px]">
            <h2 className="mt-[7px] text-[16px] leading-[24px] font-bold whitespace-nowrap text-white">4K机顶盒点播收视排名</h2>
            <div className="flex flex-1 flex-col pt-[10px]">
              <Legend swatch="bg-linear-to-r from-[#445f80] to-[#60acfc]" color="text-[#60acfc]" />
              <SourceIcons />
            </div>
          </div>
          <BarChart id="blue" view="961 105 479 291" x0={1076} x1={1368.3} top={111} max={80} step={20} from="#445f80" to="#60acfc" rows={STB} valueSize={14.6} hover />
          <div className="absolute top-[103px] left-[260px] h-[52px] w-[183px] rounded-[4px] bg-[#323232]/70 px-[5px] py-[5px] text-[14px] leading-[21px] whitespace-nowrap text-white">
            <div>HD-极限挑战-190616-娱乐</div>
            <div className="flex items-center">
              <span className="mr-[5px] ml-[-1px] h-[10px] w-[10px] rounded-full bg-[#44658a]" />
              实时: 77
            </div>
          </div>
        </section>

        <section className="flex min-h-0 flex-col border-l border-[#444] bg-[#2a2a2a]" style={{ fontFamily: FONT }}>
          <div className="flex h-[54px] shrink-0 pl-[19px]">
            <h2 className="mt-[7px] text-[16px] leading-[24px] font-bold whitespace-nowrap text-white">4K专区节目点击率排名</h2>
            <div className="flex flex-1 flex-col pt-[10px]">
              <Legend swatch="bg-linear-to-r from-[#499f7c] to-[#bfeedb]" color="text-[#a9e3ca]" />
            </div>
          </div>
          <BarChart id="green" view="1441 105 479 291" x0={1556} x1={1900} top={111} max={10} step={2} from="#499f7c" to="#bfeedb" rows={ZONE} valueSize={14.6} />
        </section>

        <Panel title="专区活动收视点击率排名">
          <svg className="block min-h-0 flex-1" viewBox="961 450 479 292" preserveAspectRatio="xMinYMin meet">
            <path d="M1042.500 457V700.500H1421" fill="none" stroke="#333" />
          </svg>
        </Panel>

        <Panel title="播播关键字搜索次数/搜索人数排名">
          <BarChart id="mint" view="1441 450 479 292" x0={1522} x1={1900.3} top={457} max={350} step={50} from="#163a3d" to="#dbeed5" rows={KEYWORD} valueSize={12.4} />
        </Panel>

        <Panel title="4K/IPTV 点播收视用户趋势图" pad="pl-[33px]" aside={<TrendLegend />}>
          <UserTrend />
        </Panel>

        <Panel title="栏目收视点击率排名">
          <BarChart id="violet" view="961 796 479 284" x0={1067.3} x1={1421.3} top={803} max={400} step={100} from="#4450c2" to="#dedfee" rows={COLUMN} valueSize={12.4} />
        </Panel>

        <Panel title="播播搜索次数/人数趋势">
          <SearchTrend />
        </Panel>
      </main>
    </div>
  );
}
